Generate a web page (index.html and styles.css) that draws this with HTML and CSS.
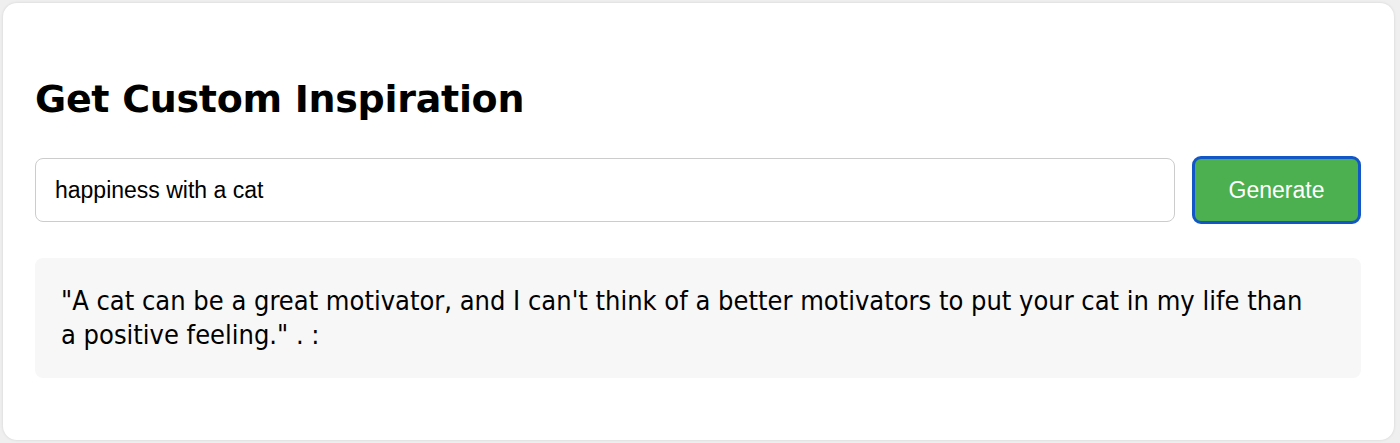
FILE: index.html
```html
<!DOCTYPE html>
<html lang="en">
<head>
<meta charset="utf-8">
<title>Get Custom Inspiration</title>
<link rel="stylesheet" href="styles.css">
</head>
<body>
<main class="card">
  <h2 class="title">Get Custom Inspiration</h2>
  <div class="form-row">
    <input class="prompt" type="text" value="happiness with a cat">
    <button class="generate" type="button">Generate</button>
  </div>
  <div class="quote">"A cat can be a great motivator, and I can't think of a better motivators to put your cat in my life than a positive feeling." . :</div>
</main>
</body>
</html>
```

FILE: styles.css
```css
html, body {
  margin: 0;
  padding: 0;
}
body {
  background: #efefef;
  padding: 3px 6px 3px 3px;
  height: 443px;
  box-sizing: border-box;
}
.card {
  background: #fff;
  border-radius: 14px;
  box-shadow: 0 0 3px rgba(0,0,0,0.12);
  height: 100%;
  box-sizing: border-box;
  padding: 74px 33px 0 32px;
}
.title {
  margin: 0;
  font-family: "DejaVu Sans", sans-serif;
  font-weight: bold;
  font-size: 38px;
  line-height: 45px;
  color: #000;
  letter-spacing: -0.3px;
}
.form-row {
  display: flex;
  align-items: center;
  gap: 17px;
  margin-top: 34px;
  height: 68px;
}
.prompt {
  flex: 1;
  height: 64px;
  box-sizing: border-box;
  border: 1px solid #cccccc;
  border-radius: 8px;
  padding: 0 19px;
  font-family: "Liberation Sans", Arial, sans-serif;
  font-size: 23px;
  color: #000;
  outline: none;
  background: #fff;
}
.generate {
  width: 169px;
  height: 68px;
  box-sizing: border-box;
  border: 3px solid #1357c6;
  border-radius: 9px;
  background: #4caf50;
  color: #fff;
  font-family: "Liberation Sans", Arial, sans-serif;
  font-size: 23px;
  padding: 0;
}
.quote {
  margin-top: 34px;
  background: #f7f7f7;
  border-radius: 8px;
  padding: 26px 44px 26px 26px;
  font-family: "DejaVu Sans Condensed", "DejaVu Sans", sans-serif;
  font-size: 27px;
  line-height: 34px;
  color: #000;
}
```
